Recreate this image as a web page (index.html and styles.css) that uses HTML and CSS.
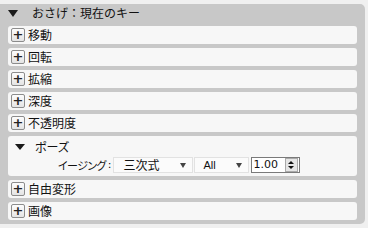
FILE: index.html
```html
<!DOCTYPE html>
<html lang="ja">
<head>
    <meta charset="UTF-8">
    <title>おさげ</title>
    <link rel="stylesheet" href="styles.css">
</head>
<body>

    <!-- Key panel -->
    <div class="panel">
        <div class="panel-head">
            <span class="tri"></span>
            <span class="head-label">おさげ：現在のキー</span>
        </div>

        <div class="prop"><span class="plus">+</span>移動</div>
        <div class="prop"><span class="plus">+</span>回転</div>
        <div class="prop"><span class="plus">+</span>拡縮</div>
        <div class="prop"><span class="plus">+</span>深度</div>
        <div class="prop"><span class="plus">+</span>不透明度</div>

        <!-- Expanded section -->
        <div class="prop open">
            <div class="open-title">
                <span class="tri small"></span>
                <span class="kana">ポーズ</span>
            </div>
            <div class="open-body">
                <span class="field-label"><span class="kana">イージング</span><span class="colon">:</span></span>
                <div class="select wide"><span>三次式</span><span class="arrow"></span></div>
                <div class="select"><span>All</span><span class="arrow"></span></div>
                <div class="spin">
                    <span class="spin-value">1.00</span>
                    <span class="spin-btns">
                        <span class="up"></span>
                        <span class="down"></span>
                    </span>
                </div>
            </div>
        </div>

        <div class="prop"><span class="plus">+</span>自由変形</div>
        <div class="prop"><span class="plus">+</span>画像</div>
    </div>

</body>
</html>
```

FILE: styles.css
```css
body {
    margin: 0;
    background-color: #f0f0f0;
    font-family: "Noto Sans CJK JP", "Noto Sans", sans-serif;
    font-size: 12px;
    color: #111;
}

.kana {
    font-feature-settings: "palt";
}

.panel {
    width: 349px;
    margin-top: 4px;
    padding: 0 8px 4px 8px;
    background-color: #c8c8c8;
    border-radius: 0 5px 5px 0;
    display: flex;
    flex-direction: column;
    gap: 4px;
}

.panel-head {
    height: 18px;
    display: flex;
    align-items: center;
}

.tri {
    width: 0;
    height: 0;
    border-left: 5px solid transparent;
    border-right: 5px solid transparent;
    border-top: 7px solid #1a1a1a;
}

.tri.small {
    border-top-width: 6px;
}

.head-label {
    margin-left: 14px;
    line-height: 18px;
}

.prop {
    height: 18px;
    background-color: #f7f7f7;
    border-radius: 3px;
    display: flex;
    align-items: center;
    line-height: 18px;
}

.plus {
    width: 12px;
    height: 12px;
    margin: 0 3px 0 3px;
    border: 1px solid #8c8c8c;
    border-radius: 2px;
    background: linear-gradient(#fdfdfd, #e4e4e4);
    font-family: "DejaVu Sans", sans-serif;
    font-weight: bold;
    font-size: 13px;
    line-height: 11px;
    text-align: center;
    color: #222;
}

.prop.open {
    height: 40px;
    flex-direction: column;
    align-items: stretch;
}

.open-title {
    height: 21px;
    display: flex;
    align-items: center;
    padding-left: 7px;
    gap: 10px;
}

.open-body {
    display: flex;
    align-items: center;
    padding-left: 50px;
    height: 16px;
}

.field-label {
    white-space: nowrap;
    display: flex;
    align-items: center;
}

.field-label .kana {
    font-size: 11px;
    letter-spacing: -0.6px;
}

.colon {
    margin: 0 1px 0 2px;
    font-family: "DejaVu Sans", sans-serif;
    font-size: 11px;
}

.select {
    height: 16px;
    width: 80px;
    margin-right: 1px;
    padding: 0 6px 0 10px;
    box-sizing: border-box;
    background-color: #fbfbfb;
    border: 1px solid #e2e2e2;
    display: flex;
    align-items: center;
    justify-content: space-between;
    line-height: 16px;
    flex-shrink: 0;
}

.select:not(.wide) {
    width: 55px;
    padding-left: 9px;
    font-family: "Liberation Sans", sans-serif;
    font-size: 11px;
}

.arrow {
    width: 0;
    height: 0;
    border-left: 3px solid transparent;
    border-right: 3px solid transparent;
    border-top: 5px solid #444;
}

.spin {
    height: 16px;
    width: 49px;
    margin-left: 1px;
    box-sizing: border-box;
    border: 1px solid #7a7a7a;
    background-color: #fff;
    display: flex;
    align-items: center;
    justify-content: space-between;
    flex-shrink: 0;
}

.spin-value {
    padding-left: 2px;
    font-family: "DejaVu Sans", sans-serif;
    font-size: 11px;
    line-height: 14px;
}

.spin-btns {
    width: 13px;
    height: 14px;
    margin-right: 1px;
    background-color: #e6e6e6;
    border: 1px solid #aaa;
    box-sizing: border-box;
    display: flex;
    flex-direction: column;
    align-items: center;
    justify-content: center;
    gap: 2px;
}

.spin-btns .up {
    border-left: 3px solid transparent;
    border-right: 3px solid transparent;
    border-bottom: 3px solid #111;
}

.spin-btns .down {
    border-left: 3px solid transparent;
    border-right: 3px solid transparent;
    border-top: 3px solid #111;
}
```
